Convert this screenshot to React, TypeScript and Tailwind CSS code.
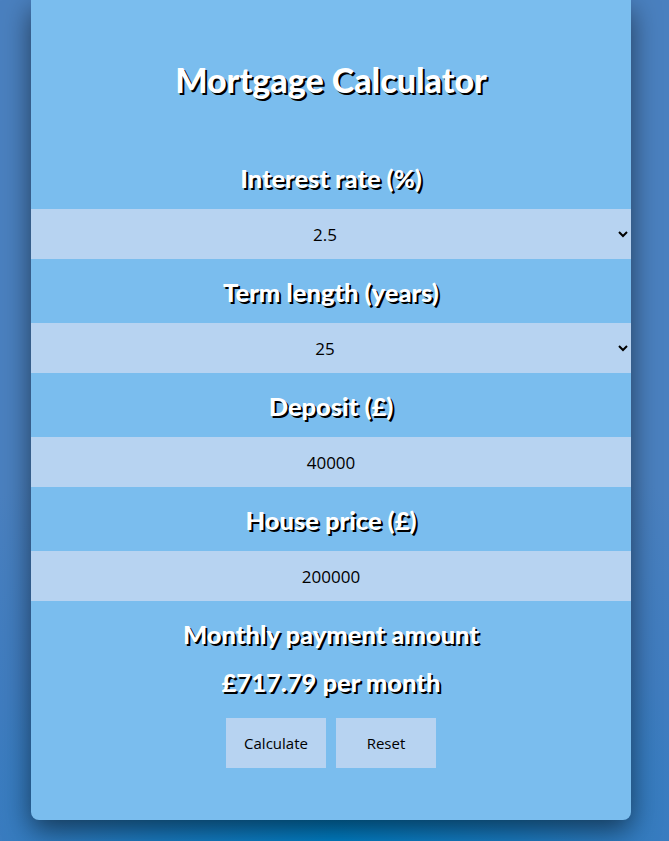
import { useState } from "react"

const heading = "font-['Lato',sans-serif] font-black text-white text-[25.5px] leading-[30px] text-center [text-shadow:2px_2px_0_#000]"
const field = "w-full h-[50px] bg-[#b7d3f1] text-black text-[17px] text-center [text-align-last:center] font-['Open_Sans',sans-serif] outline-none border-0"

export default function App() {
    const [rate, setRate] = useState("2.5")
    const [term, setTerm] = useState("25")
    const [deposit, setDeposit] = useState("40000")
    const [price, setPrice] = useState("200000")

    return (
        <div className="min-h-[841px] w-full bg-[radial-gradient(ellipse_75%_55%_at_50%_100%,#0080c8_0%,#1a7dc4_35%,#3f7cbf_72%,#4a80bf_100%)] flex">
            <div className="ml-[31px] w-[600px] h-[820px] bg-[#7abdee] rounded-b-lg shadow-[0_10px_28px_rgba(0,0,0,0.55)] flex flex-col">
                <h1 className="font-['Lato',sans-serif] font-black text-white text-[34px] leading-[40px] text-center pt-[60px] pb-[45px] [text-shadow:2px_2px_0_#000]">
                    Mortgage Calculator
                </h1>

                <label className={`${heading} pt-[18px] pb-4`}>Interest rate (%)</label>
                <select className={`${field} px-2`} value={rate} onChange={(e) => setRate(e.target.value)}>
                    <option>1.5</option>
                    <option>2</option>
                    <option>2.5</option>
                    <option>3</option>
                    <option>3.5</option>
                </select>

                <label className={`${heading} pt-[18px] pb-4`}>Term length (years)</label>
                <select className={`${field} px-2`} value={term} onChange={(e) => setTerm(e.target.value)}>
                    <option>15</option>
                    <option>20</option>
                    <option>25</option>
                    <option>30</option>
                </select>

                <label className={`${heading} pt-[18px] pb-4`}>Deposit (£)</label>
                <input className={field} value={deposit} onChange={(e) => setDeposit(e.target.value)} />

                <label className={`${heading} pt-[18px] pb-4`}>House price (£)</label>
                <input className={field} value={price} onChange={(e) => setPrice(e.target.value)} />

                <h2 className={`${heading} pt-[18px] pb-4`}>Monthly payment amount</h2>
                <p className={`${heading} pt-[2px]`}>£717.79 per month</p>

                <div className="flex justify-center gap-[10px] mt-[21px]">
                    <button className="w-[100px] h-[50px] bg-[#b7d3f1] text-black text-[15px] font-['Open_Sans',sans-serif]">Calculate</button>
                    <button className="w-[100px] h-[50px] bg-[#b7d3f1] text-black text-[15px] font-['Open_Sans',sans-serif]">Reset</button>
                </div>
            </div>
        </div>
    )
}
